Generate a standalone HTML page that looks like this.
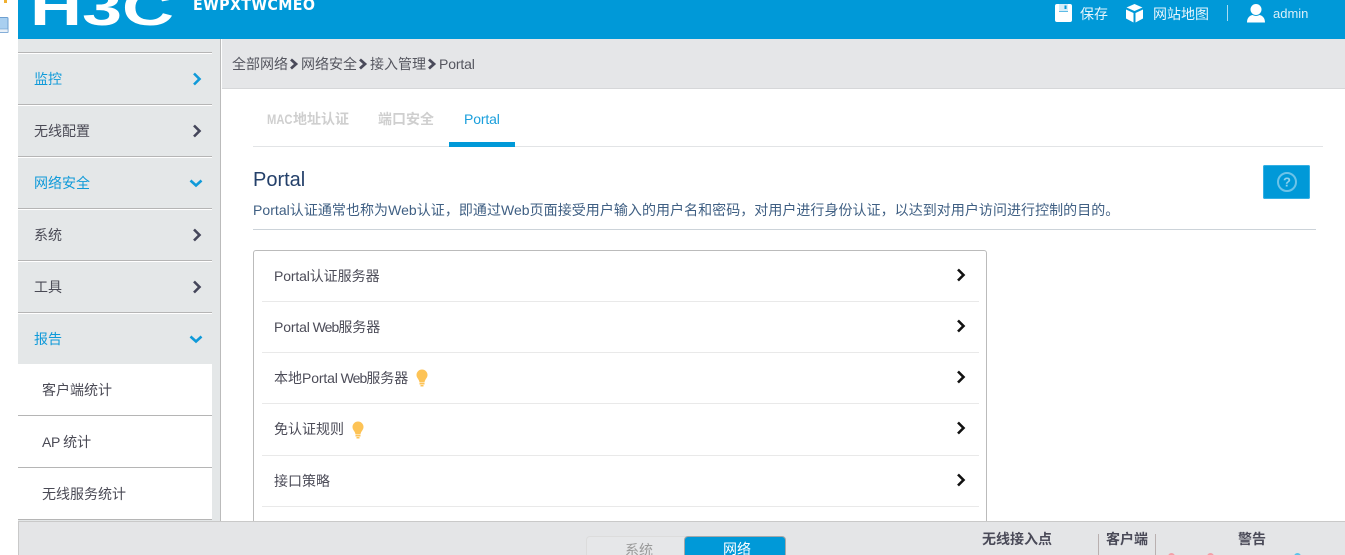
<!DOCTYPE html>
<html><head><meta charset="utf-8">
<style>
html,body{margin:0;padding:0;background:#fff;width:1345px;height:555px;overflow:hidden}
body{position:relative;font-family:"Liberation Sans","Noto Sans CJK SC",sans-serif;font-size:14px;color:#4a4a55}
.a{position:absolute;white-space:nowrap}
.t{position:absolute;white-space:nowrap;line-height:20px;height:20px}
.l{position:absolute;height:1px}
.chev{position:absolute;width:16px;height:16px;fill:none;stroke-width:2.6}
.p{letter-spacing:-.15px}
.w{letter-spacing:-.95px}
</style></head><body>

<!-- left strip icons -->
<svg class="a" style="left:0;top:17px" width="9" height="17"><rect x="-3" y="0.500" width="11" height="15" rx="1" fill="#a9cff0" stroke="#6d9fd0"/><rect x="-3" y="12" width="11" height="3.500" fill="#e8f0f8" stroke="#6d9fd0" stroke-width=".6"/></svg>
<div class="a" style="left:4px;top:0;width:3px;height:3px;background:#f0b030"></div>

<!-- header -->
<div class="a" style="left:18px;top:0;width:1327px;height:39px;background:#0099d8"></div>
<svg class="a" style="left:18px;top:0" width="170" height="39">
  <text x="12" y="25" font-family="Liberation Sans" font-size="50" font-weight="700" fill="#fff" textLength="144" lengthAdjust="spacingAndGlyphs">H3C</text>
</svg>
<div class="t" style="left:193px;top:-5px;color:#fff;font-weight:700;font-size:16px;letter-spacing:0.4px;font-family:'DejaVu Sans','Liberation Sans',sans-serif;transform-origin:left;transform:scaleX(.89)">EWPXTWCMEO</div>

<svg class="a" style="left:1054px;top:3px" width="19" height="20"><path d="M1 3a2 2 0 0 1 2-2h13a2 2 0 0 1 2 2v14a2 2 0 0 1-2 2H3a2 2 0 0 1-2-2z" fill="#fff"/><path d="M5 1v6.500a1 1 0 0 0 1 1h7a1 1 0 0 0 1-1V1" fill="#d5edf8"/><path d="M5 8.500h9" stroke="#5dbbe6"/><rect x="10.500" y="2.500" width="2" height="3.500" fill="#0099d8"/></svg>
<div class="t" style="left:1080px;top:4px;color:#e6f5fc">保存</div>
<svg class="a" style="left:1125px;top:3px" width="20" height="20"><path d="M9.500 1 L17.500 4.500 L9.500 8 L1.500 4.500z" fill="#fff"/><path d="M1 6.500 L8.500 10 V19.500 L1 15.500z" fill="#fff"/><path d="M18 6.500 L10.500 10 V19.500 L18 15.500z" fill="#fff"/></svg>
<div class="t" style="left:1153px;top:4px;color:#e6f5fc">网站地图</div>
<div class="a" style="left:1227px;top:5px;width:1px;height:16px;background:#a8dcf2"></div>
<svg class="a" style="left:1246px;top:3px" width="20" height="20"><circle cx="10" cy="6.500" r="5.500" fill="#fff"/><path d="M1 19.500c0-5 3-7 5.500-7.500 2 1.200 5 1.200 7 0 2.500.5 5.500 2.500 5.500 7.500z" fill="#fff"/></svg>
<div class="t" style="left:1273px;top:4px;color:#d8eff9;font-size:13px">admin</div>

<!-- sidebar -->
<div class="a" style="left:18px;top:39px;width:202px;height:482px;background:#e4e7e8"></div>
<div class="a" style="left:220px;top:39px;width:1px;height:482px;background:#bbb"></div>
<div class="a" style="left:18px;top:364px;width:194px;height:156px;background:#fff"></div>

<div class="l" style="left:18px;top:52px;width:194px;background:#b5b5b5;box-shadow:0 1px 0 #fff"></div>
<div class="l" style="left:18px;top:104px;width:194px;background:#b5b5b5;box-shadow:0 1px 0 #fff"></div>
<div class="l" style="left:18px;top:156px;width:194px;background:#b5b5b5;box-shadow:0 1px 0 #fff"></div>
<div class="l" style="left:18px;top:208px;width:194px;background:#b5b5b5;box-shadow:0 1px 0 #fff"></div>
<div class="l" style="left:18px;top:260px;width:194px;background:#b5b5b5;box-shadow:0 1px 0 #fff"></div>
<div class="l" style="left:18px;top:312px;width:194px;background:#b5b5b5;box-shadow:0 1px 0 #fff"></div>
<div class="l" style="left:18px;top:415px;width:194px;background:#b5b5b5"></div>
<div class="l" style="left:18px;top:467px;width:194px;background:#b5b5b5"></div>
<div class="l" style="left:18px;top:519px;width:194px;background:#b5b5b5"></div>

<div class="t" style="left:34px;top:69px;color:#0f9ad9">监控</div>
<div class="t" style="left:34px;top:121px;color:#4a4a55">无线配置</div>
<div class="t" style="left:34px;top:173px;color:#0f9ad9">网络安全</div>
<div class="t" style="left:34px;top:225px;color:#4a4a55">系统</div>
<div class="t" style="left:34px;top:277px;color:#4a4a55">工具</div>
<div class="t" style="left:34px;top:329px;color:#0f9ad9">报告</div>
<div class="t" style="left:42px;top:380px;color:#4a4a55">客户端统计</div>
<div class="t" style="left:42px;top:432px;color:#4a4a55"><span style="letter-spacing:-.4px">AP </span>统计</div>
<div class="t" style="left:42px;top:484px;color:#4a4a55">无线服务统计</div>

<svg class="chev" style="left:189px;top:71px" viewBox="0 0 16 16"><path d="M5 2.500 L10.500 8 L5 13.500" stroke="#0f9ad9"/></svg>
<svg class="chev" style="left:189px;top:123px" viewBox="0 0 16 16"><path d="M5 2.500 L10.500 8 L5 13.500" stroke="#44465a"/></svg>
<svg class="chev" style="left:188px;top:175px" viewBox="0 0 16 16"><path d="M2.500 5.500 L8 10.500 L13.500 5.500" stroke="#0f9ad9"/></svg>
<svg class="chev" style="left:189px;top:227px" viewBox="0 0 16 16"><path d="M5 2.500 L10.500 8 L5 13.500" stroke="#44465a"/></svg>
<svg class="chev" style="left:189px;top:279px" viewBox="0 0 16 16"><path d="M5 2.500 L10.500 8 L5 13.500" stroke="#44465a"/></svg>
<svg class="chev" style="left:188px;top:331px" viewBox="0 0 16 16"><path d="M2.500 5.500 L8 10.500 L13.500 5.500" stroke="#0f9ad9"/></svg>

<!-- breadcrumb -->
<div class="a" style="left:222px;top:39px;width:1123px;height:49px;background:#e5e6e8;border-bottom:1px solid #d6d7d9"></div>
<div class="t" style="left:232px;top:54px;color:#55565f">全部网络</div>
<svg class="a" style="left:289px;top:58px" width="10" height="12" fill="none"><path d="M2 1.500 L7 6 L2 10.500" stroke="#4a4a5a" stroke-width="2.800"/></svg>
<div class="t" style="left:301px;top:54px;color:#55565f">网络安全</div>
<svg class="a" style="left:358px;top:58px" width="10" height="12" fill="none"><path d="M2 1.500 L7 6 L2 10.500" stroke="#4a4a5a" stroke-width="2.800"/></svg>
<div class="t" style="left:370px;top:54px;color:#55565f">接入管理</div>
<svg class="a" style="left:427px;top:58px" width="10" height="12" fill="none"><path d="M2 1.500 L7 6 L2 10.500" stroke="#4a4a5a" stroke-width="2.800"/></svg>
<div class="t p" style="left:439px;top:54px;color:#55565f">Portal</div>

<!-- tabs -->
<div class="t" style="left:267px;top:109px;color:#cfcfcf;font-weight:700"><span style="display:inline-block;width:26px;transform:scaleX(.8);transform-origin:left">MAC</span>地址认证</div>
<div class="t" style="left:378px;top:109px;color:#cfcfcf;font-weight:700">端口安全</div>
<div class="t p" style="left:464px;top:109px;color:#1a9fdc">Portal</div>
<div class="l" style="left:253px;top:146px;width:1070px;background:#e2e4e6"></div>
<div class="a" style="left:449px;top:142px;width:66px;height:5px;background:#0099d8"></div>

<!-- title -->
<div class="a" style="left:253px;top:168px;font-size:20px;line-height:24px;color:#24406a">Portal</div>
<div class="t" style="left:253px;top:200px;color:#3f5f83;letter-spacing:.04px">Portal认证通常也称为Web认证，即通过Web页面接受用户输入的用户名和密码，对用户进行身份认证，以达到对用户访问进行控制的目的。</div>
<div class="l" style="left:253px;top:229px;width:1063px;background:#ccd3d9"></div>

<!-- help -->
<div class="a" style="left:1263px;top:165px;width:47px;height:34px;background:#0099d8;border-radius:2px;box-shadow:inset 0 0 0 1px #35b0e4"></div>
<svg class="a" style="left:1276px;top:171px" width="22" height="22"><circle cx="11" cy="11" r="9" fill="none" stroke="#6cc3e8" stroke-width="2"/><text x="11" y="15.500" font-family="Liberation Sans" font-size="13" font-weight="700" text-anchor="middle" fill="#8fd2ee">?</text></svg>

<!-- card -->
<div class="a" style="left:253px;top:250px;width:734px;height:275px;border:1px solid #bbb;border-radius:3px;box-sizing:border-box"></div>
<div class="l" style="left:262px;top:301px;width:717px;background:#e9e9e9"></div>
<div class="l" style="left:262px;top:352px;width:717px;background:#e9e9e9"></div>
<div class="l" style="left:262px;top:403px;width:717px;background:#e9e9e9"></div>
<div class="l" style="left:262px;top:455px;width:717px;background:#e9e9e9"></div>
<div class="l" style="left:262px;top:506px;width:717px;background:#e9e9e9"></div>

<div class="t" style="left:274px;top:266px;color:#4c4c58"><span class="p">Portal</span>认证服务器</div>
<div class="t" style="left:274px;top:317px;color:#4c4c58"><span class="p">Portal</span><span class="w"> Web</span>服务器</div>
<div class="t" style="left:274px;top:368px;color:#4c4c58">本地<span class="p">Portal</span><span class="w"> Web</span>服务器</div>
<div class="t" style="left:274px;top:419px;color:#4c4c58">免认证规则</div>
<div class="t" style="left:274px;top:471px;color:#4c4c58">接口策略</div>

<svg class="a" style="left:416px;top:369px" width="12" height="18"><path d="M6 0.500a5.500 5.500 0 0 1 5.500 5.500c0 3-2.500 4-3 7.500h-5c-.5-3.500-3-4.500-3-7.500A5.500 5.500 0 0 1 6 0.500z" fill="#fdc356"/><rect x="3.500" y="14" width="5" height="1.500" fill="#fdc356"/><rect x="4.500" y="16" width="3" height="1.500" fill="#fdc356"/></svg>
<svg class="a" style="left:352px;top:421px" width="12" height="18"><path d="M6 0.500a5.500 5.500 0 0 1 5.500 5.500c0 3-2.500 4-3 7.500h-5c-.5-3.500-3-4.500-3-7.500A5.500 5.500 0 0 1 6 0.500z" fill="#fdc356"/><rect x="3.500" y="14" width="5" height="1.500" fill="#fdc356"/><rect x="4.500" y="16" width="3" height="1.500" fill="#fdc356"/></svg>

<svg class="chev" style="left:953px;top:267px" viewBox="0 0 16 16"><path d="M5 2.500 L10.500 8 L5 13.500" stroke="#111"/></svg>
<svg class="chev" style="left:953px;top:318px" viewBox="0 0 16 16"><path d="M5 2.500 L10.500 8 L5 13.500" stroke="#111"/></svg>
<svg class="chev" style="left:953px;top:369px" viewBox="0 0 16 16"><path d="M5 2.500 L10.500 8 L5 13.500" stroke="#111"/></svg>
<svg class="chev" style="left:953px;top:420px" viewBox="0 0 16 16"><path d="M5 2.500 L10.500 8 L5 13.500" stroke="#111"/></svg>
<svg class="chev" style="left:953px;top:472px" viewBox="0 0 16 16"><path d="M5 2.500 L10.500 8 L5 13.500" stroke="#111"/></svg>

<!-- footer -->
<div class="a" style="left:18px;top:521px;width:1327px;height:34px;background:#e4e5e7;border-top:1px solid #c9c9c9;border-left:1px solid #c9c9c9;box-sizing:border-box"></div>
<div class="a" style="left:586px;top:536px;width:100px;height:19px;background:#e6e7e9;border:1px solid #dcdcdc;border-bottom:none;border-radius:4px 0 0 0;box-sizing:border-box"></div>
<div class="t" style="left:625px;top:540px;color:#9a9a9a">系统</div>
<div class="a" style="left:684px;top:536px;width:102px;height:19px;background:#0099d8;border:1px solid #a5a8aa;border-bottom:none;border-radius:4px 4px 0 0;box-sizing:border-box"></div>
<div class="t" style="left:723px;top:539px;color:#fff">网络</div>

<div class="t" style="left:982px;top:529px;color:#4a4a58;font-weight:700">无线接入点</div>
<div class="a" style="left:1098px;top:534px;width:1px;height:21px;background:#b9b0b0"></div>
<div class="t" style="left:1106px;top:529px;color:#4a4a58;font-weight:700">客户端</div>
<div class="a" style="left:1155px;top:534px;width:1px;height:21px;background:#b9b0b0"></div>
<div class="t" style="left:1238px;top:529px;color:#4a4a58;font-weight:700">警告</div>
<div class="a" style="left:1168px;top:553px;width:7px;height:7px;border-radius:50%;background:#f3a0a8"></div>
<div class="a" style="left:1207px;top:553px;width:7px;height:7px;border-radius:50%;background:#f3a0a8"></div>
<div class="a" style="left:1294px;top:553px;width:7px;height:7px;border-radius:50%;background:#5cc4ea"></div>

</body></html>
